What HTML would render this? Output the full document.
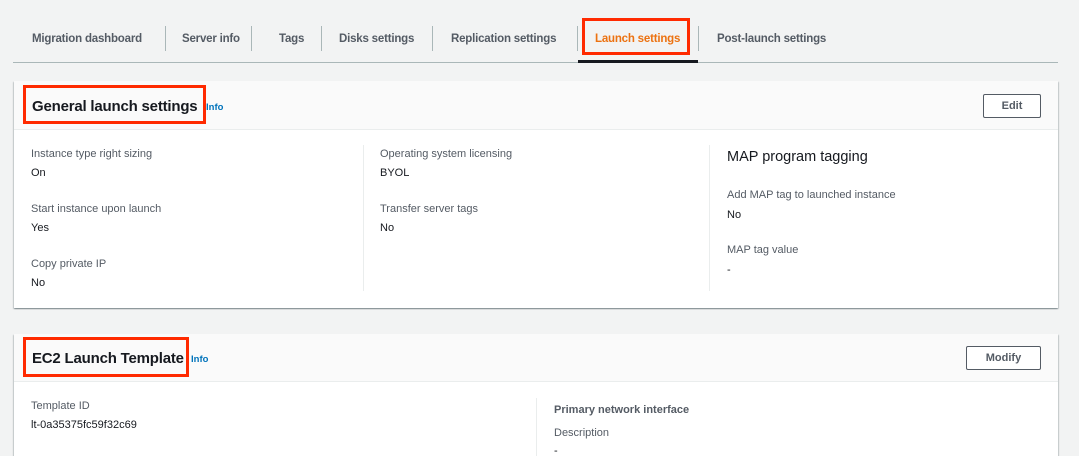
<!DOCTYPE html>
<html><head><meta charset="utf-8"><style>
*{margin:0;padding:0;box-sizing:border-box}
html,body{width:1079px;height:456px;overflow:hidden}
body{background:#f2f3f3;font-family:"Liberation Sans",Arial,sans-serif;color:#16191f;position:relative}
.a{position:absolute;white-space:nowrap}
.tab{font-size:11.5px;font-weight:bold;color:#545b64;top:33px;letter-spacing:-0.2px}
.sep{position:absolute;top:26px;width:1px;height:25px;background:#aab7b8}
.card{position:absolute;left:14px;width:1044px;background:#fff;box-shadow:0 1px 1px rgba(0,28,36,.3),1px 1px 1px rgba(0,28,36,.15),-1px 1px 1px rgba(0,28,36,.15)}
.hd{position:absolute;left:0;top:0;width:100%;height:49px;background:#fafafa;border-bottom:1px solid #eaeded}
.red{position:absolute;border:3px solid #ff2a00}
.h2{font-size:15px;font-weight:bold;letter-spacing:-0.2px}
.info{font-size:9.5px;font-weight:bold;color:#0073bb}
.btn{position:absolute;border:1px solid #545b64;border-radius:2px;background:#fff;font-size:11px;font-weight:bold;color:#545b64;text-align:center;line-height:22px;height:24px}
.l{font-size:11px;color:#545b64}
.v{font-size:11px;color:#16191f}
.vd{position:absolute;width:1px;background:#eaeded}
</style></head><body>
<div class="a tab" style="left:32px">Migration dashboard</div>
<div class="sep" style="left:165px"></div>
<div class="a tab" style="left:182px">Server info</div>
<div class="sep" style="left:251px"></div>
<div class="a tab" style="left:279px">Tags</div>
<div class="sep" style="left:321px"></div>
<div class="a tab" style="left:339px">Disks settings</div>
<div class="sep" style="left:432px"></div>
<div class="a tab" style="left:451px">Replication settings</div>
<div class="sep" style="left:577px"></div>
<div class="a tab" style="left:595px;color:#ec7211">Launch settings</div>
<div class="red" style="left:582px;top:18px;width:108px;height:37px"></div>
<div class="sep" style="left:698px"></div>
<div class="a tab" style="left:717px">Post-launch settings</div>
<div class="a" style="left:13px;top:62px;width:1045px;height:1px;background:#aab7b8"></div>
<div class="a" style="left:578px;top:60px;width:120px;height:3px;background:#16191f"></div>

<div class="card" style="top:81px;height:227px">
 <div class="hd"></div>
 <div class="a h2" style="left:18px;top:17px">General launch settings</div>
 <div class="a info" style="left:192px;top:21px">Info</div>
 <div class="btn" style="left:969px;top:13px;width:58px">Edit</div>
 <div class="vd" style="left:349px;top:64px;height:146px"></div>
 <div class="vd" style="left:695px;top:64px;height:146px"></div>
 <div class="a l" style="left:17px;top:67px">Instance type right sizing</div>
 <div class="a v" style="left:17px;top:86px">On</div>
 <div class="a l" style="left:17px;top:122px">Start instance upon launch</div>
 <div class="a v" style="left:17px;top:141px">Yes</div>
 <div class="a l" style="left:17px;top:177px">Copy private IP</div>
 <div class="a v" style="left:17px;top:196px">No</div>
 <div class="a l" style="left:366px;top:67px">Operating system licensing</div>
 <div class="a v" style="left:366px;top:86px">BYOL</div>
 <div class="a l" style="left:366px;top:122px">Transfer server tags</div>
 <div class="a v" style="left:366px;top:141px">No</div>
 <div class="a" style="left:713px;top:68px;font-size:14.5px">MAP program tagging</div>
 <div class="a l" style="left:713px;top:108px">Add MAP tag to launched instance</div>
 <div class="a v" style="left:713px;top:128px">No</div>
 <div class="a l" style="left:713px;top:163px">MAP tag value</div>
 <div class="a v" style="left:713px;top:183px">-</div>
</div>
<div class="red" style="left:23px;top:85px;width:183px;height:39px"></div>

<div class="card" style="top:334px;height:140px">
 <div class="hd" style="height:48px"></div>
 <div class="a h2" style="left:18px;top:16px">EC2 Launch Template</div>
 <div class="a info" style="left:177px;top:20px">Info</div>
 <div class="btn" style="left:952px;top:12px;width:75px">Modify</div>
 <div class="vd" style="left:522px;top:64px;height:80px"></div>
 <div class="a l" style="left:17px;top:66px">Template ID</div>
 <div class="a v" style="left:17px;top:85px">lt-0a35375fc59f32c69</div>
 <div class="a" style="left:540px;top:70px;font-size:11px;font-weight:bold;color:#545b64">Primary network interface</div>
 <div class="a l" style="left:540px;top:93px">Description</div>
 <div class="a v" style="left:540px;top:111px">-</div>
</div>
<div class="red" style="left:23px;top:337px;width:166px;height:40px"></div>
</body></html>
